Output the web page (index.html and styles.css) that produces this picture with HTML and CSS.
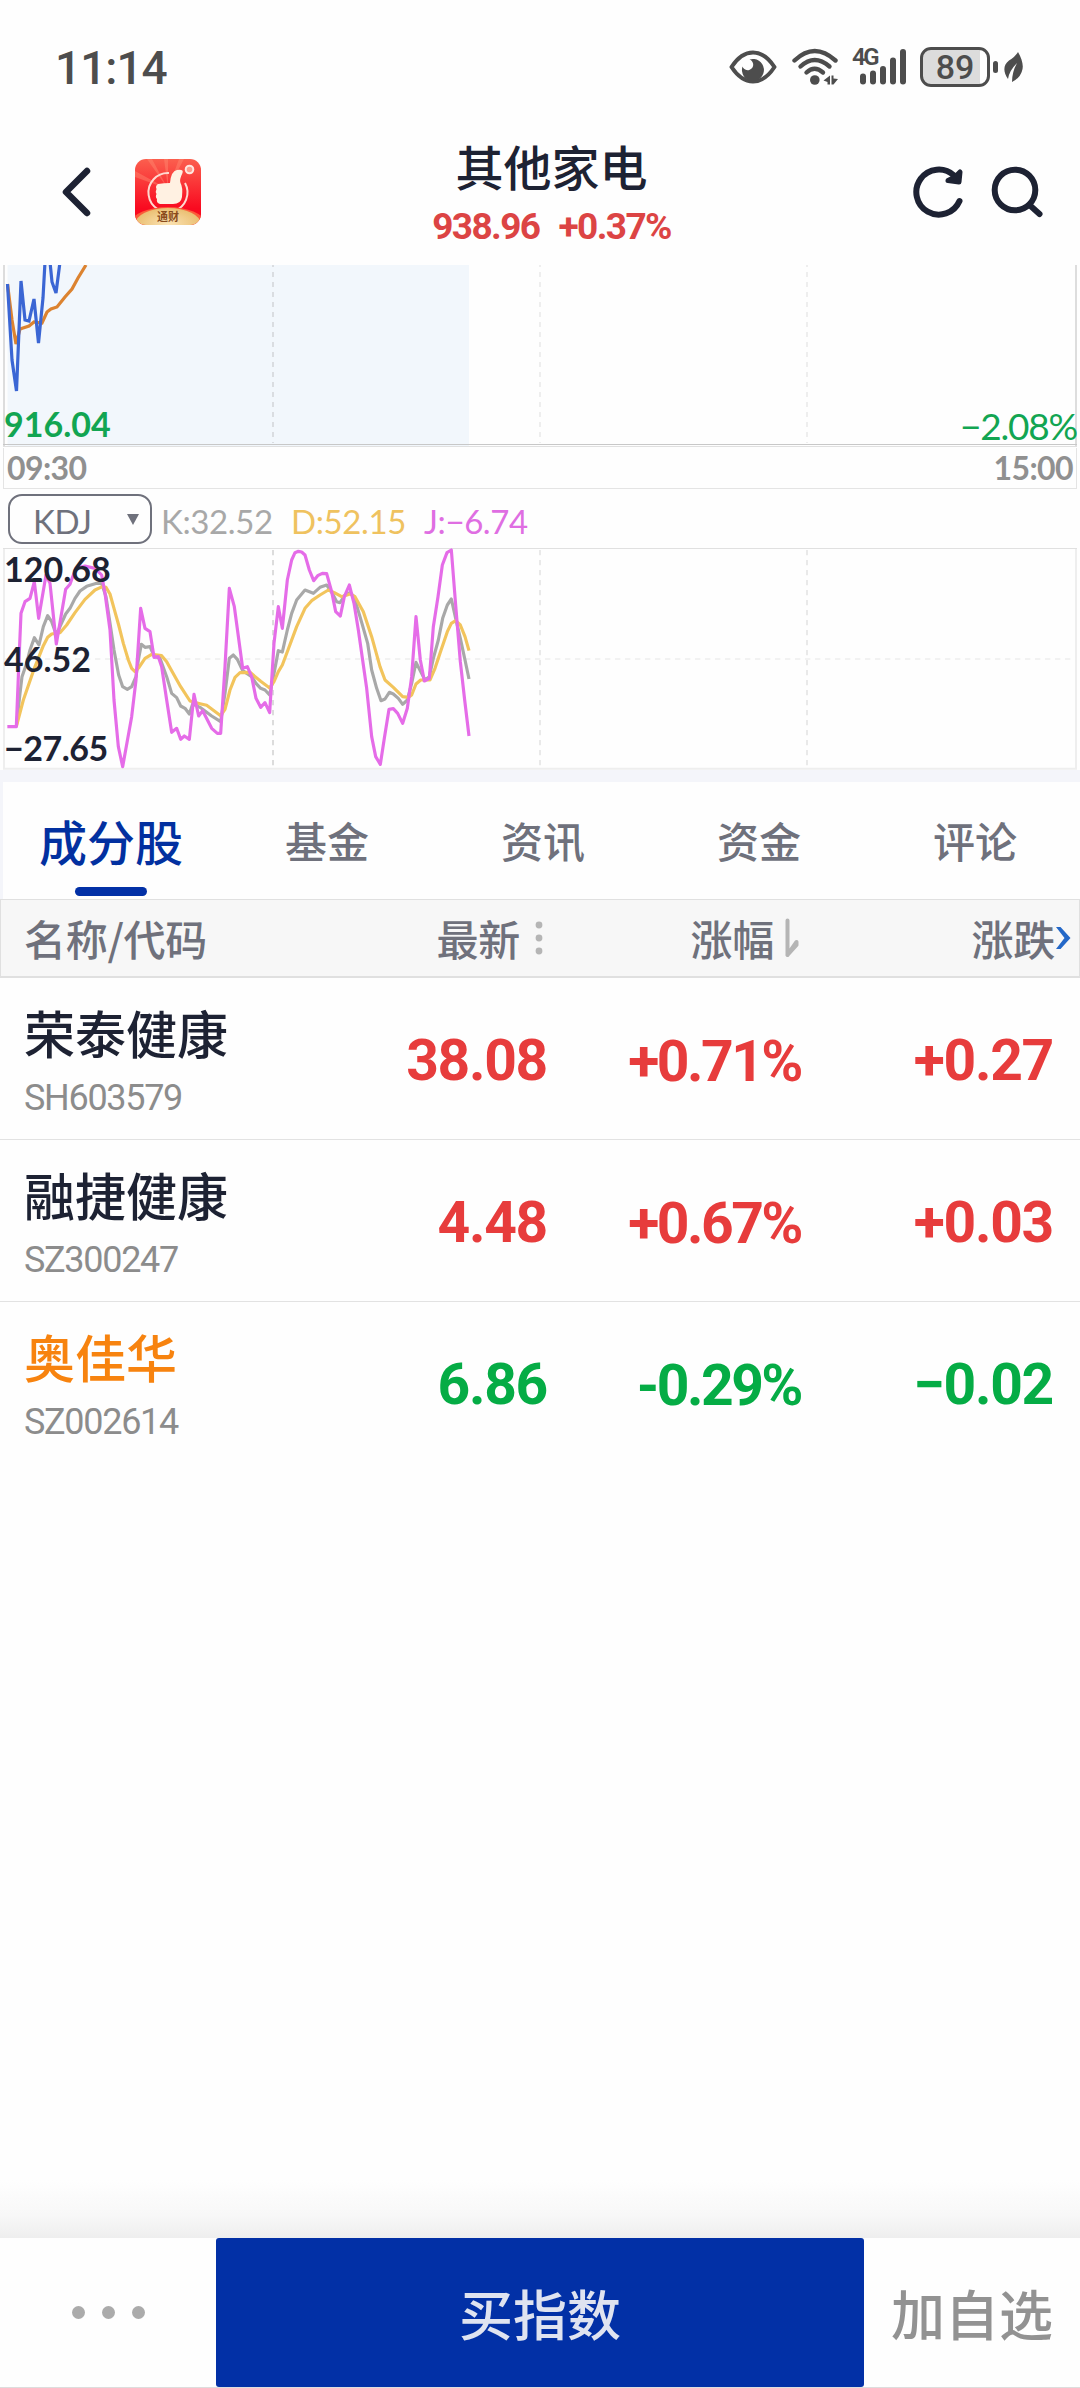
FILE: index.html
```html
<!DOCTYPE html>
<html lang="zh-CN">
<head>
  <meta charset="UTF-8">
  <meta name="viewport" content="width=device-width, initial-scale=1.0">
  <title>其他家电</title>
  <link rel="stylesheet" href="styles.css">
</head>
<body>
  <div class="status-bar">
    <span class="clock">11:14</span>
    <div class="status-icons">
      <svg class="icon-eye" width="48" height="34" viewBox="0 0 48 34">
        <path d="M2.5 17Q12 2.5 24 2.5T45.500 17Q36 31.500 24 31.500T2.500 17Z" fill="none" stroke="#4d4d4d" stroke-width="4" stroke-linejoin="round"/>
        <path d="M20.500 9.500A11 11 0 1 1 13.500 16.500A5.500 5.500 0 1 0 20.500 9.500Z" fill="#4d4d4d"/>
      </svg>
      <svg class="icon-wifi" width="46" height="38" viewBox="0 0 46 38">
        <g fill="none" stroke="#4d4d4d" stroke-width="4.400" stroke-linecap="round">
          <path d="M2.500 12.500Q22.500 -6.500 43.500 12.500"/>
          <path d="M8.500 18.500Q22.500 5.500 37.500 18.500"/>
          <path d="M14.500 24.500Q22.500 17 31 24.500"/>
        </g>
        <circle cx="22.800" cy="32" r="4.800" fill="#4d4d4d"/>
        <path d="M38 27.500V36.500H35.500V34L31.500 32.500ZM39.500 27.500H41.500V30.500L46 31L41.500 36.500H39.500Z" fill="#4d4d4d"/>
      </svg>
      <div class="signal">
        <span class="network">4G</span>
        <svg width="54" height="38" viewBox="0 0 54 38">
          <path d="M11 28V33M21 25V33M31 20.500V33M41 12V33M51 3.500V33" stroke="#4d4d4d" stroke-width="6" stroke-linecap="round" transform="translate(0 .5)"/>
        </svg>
      </div>
      <div class="battery"><span>89</span></div>
      <i class="battery-tip"></i>
      <svg class="icon-leaf" width="20" height="32" viewBox="0 0 20 32">
        <path d="M14 1C18 8 20 15 18 20Q16 27 8 31Q8 21 13 12Q5 20 4 28C-1 21 -1 14 5 9.500Q11 6 14 1Z" fill="#4d4d4d"/>
      </svg>
    </div>
  </div>

  <header class="header">
    <svg class="back" width="32" height="52" viewBox="0 0 32 52">
      <path d="M26 5L5 26L26 47" fill="none" stroke="#1d2233" stroke-width="6.500" stroke-linecap="round" stroke-linejoin="round"/>
    </svg>
    <svg class="app-logo" width="66" height="66" viewBox="0 0 66 66">
      <defs>
        <linearGradient id="red" x1="0" y1="0" x2="0" y2="1">
          <stop offset="0" stop-color="#fb5f4e"/>
          <stop offset=".75" stop-color="#f90a20"/>
        </linearGradient>
        <radialGradient id="gold">
          <stop offset="0" stop-color="#fbe3b4"/>
          <stop offset="1" stop-color="#eabf72"/>
        </radialGradient>
        <clipPath id="tile"><rect width="66" height="66" rx="11"/></clipPath>
      </defs>
      <g clip-path="url(#tile)">
        <rect width="66" height="66" fill="url(#red)"/>
        <path d="M33 30L12 0H17ZM33 30L29 0H33ZM33 30L0 12V18ZM33 30L44 0H49Z" fill="#ff8a70" opacity=".45"/>
        <path d="M34 14A19.500 19.500 0 1 0 50 24" fill="none" stroke="#ffd9d0" stroke-width="2"/>
        <path d="M35 24Q36 12 42 11Q49 10 47.500 14Q44 21 45.500 24Q48 28 47 38Q46 45 38 45H25Q21 44 22 40Q20 38 21.500 35Q20 33 21.500 30Q20 27 23 25Q29 24 35 24Z" fill="#fff1e2"/>
        <circle cx="54.500" cy="10.500" r="3.800" fill="#ff9c8c" stroke="#ffe6df" stroke-width="2"/>
        <ellipse cx="33" cy="63" rx="36" ry="15" fill="#fb5b3a"/>
        <ellipse cx="33" cy="65" rx="33" ry="16" fill="url(#gold)"/>
        <text class="logo-text" x="33" y="62" text-anchor="middle">通财</text>
      </g>
    </svg>
    <div class="title">
      <h1>其他家电</h1>
      <p><span>938.96</span><span>+0.37%</span></p>
    </div>
    <svg class="refresh" width="52" height="54" viewBox="0 0 52 54">
      <path d="M47.500 36A22.500 22.500 0 1 1 42 10.500" fill="none" stroke="#1d2233" stroke-width="6" stroke-linecap="round"/>
      <path d="M48 7L47 17L36 15.500L43 12Z" fill="#1d2233" stroke="#1d2233" stroke-width="5" stroke-linejoin="round"/>
    </svg>
    <svg class="search" width="52" height="54" viewBox="0 0 52 54">
      <circle cx="24" cy="25" r="20.300" fill="none" stroke="#1d2233" stroke-width="6"/>
      <path d="M38.500 40L48.500 49" stroke="#1d2233" stroke-width="6" stroke-linecap="round"/>
    </svg>
  </header>

  <section class="chart price-chart">
    <svg width="1080" height="183" viewBox="0 265 1080 183">
      <rect x="7.500" y="265" width="461.500" height="181" fill="#f2f7fc"/>
      <g stroke-width="2" stroke-dasharray="5 5" stroke-dashoffset="3">
        <path d="M273 265V443" stroke="#dadde1"/>
        <path d="M540 265V443M807 265V443" stroke="#eee"/>
      </g>
      <path d="M4 265V446M1076 265V446" stroke="#ddd" stroke-width="2"/>
      <path d="M3 444.500H1077" stroke="#c8c8c8"/>
      <path d="M3 446.500H1077" stroke="#e0e0e0"/>
      <g fill="none" stroke-width="3.200">
        <path stroke="#dc8330" d="M7.500 284L12 320L16 344L20 329L29 326L34 322L42 323L47 312L51 309L57 307L65 297L72 289L78 278L86 265"/>
        <path stroke="#3b66d4" d="M7.500 284L12 360L16.500 391L21 281L25 320L29 321L34 299L38.500 343L43 298L45 262L50 262L52 282L56 293L60 262"/>
      </g>
    </svg>
    <span class="label low">916.04</span>
    <span class="label low-percent">−2.08%</span>
  </section>
  <div class="time-axis"><span>09:30</span><span>15:00</span></div>

  <div class="indicator">
    <div class="select"><span>KDJ</span><i></i></div>
    <span class="k">K:32.52</span>
    <span class="d">D:52.15</span>
    <span class="j">J:−6.74</span>
  </div>

  <section class="chart kdj-chart">
    <svg width="1080" height="222" viewBox="0 204 3240 666">
      <g stroke="#e9e9e9" stroke-width="6" stroke-dasharray="16 14">
        <path d="M819 210V860" stroke="#dcdcdc"/>
        <path d="M1620 210V860M2421 210V860"/>
        <path d="M15 537H3225" stroke="#eee" stroke-width="4"/>
      </g>
      <path d="M12 206V866M3228 206V866M9 866H3231" stroke="#eee" stroke-width="6"/>
      <path d="M9 205.500H3231" stroke="#e0e0e0" stroke-width="3"/>
      <g fill="none" stroke-width="9.500" stroke-linejoin="round">
        <path stroke="#a8a8a8" d="M49 740L60 640L66 590L80 550L90 510L103 473L117 495L130 440L143 407L155 425L169 465L180 440L197 402L210 385L225 355L240 333L260 319L290 310L305 310L318 350L330 430L342 510L356 585L368 620L382 628L395 620L408 590L415 540L424 493L435 502L450 500L462 528L480 535L500 590L515 640L530 653L542 678L555 685L568 702L578 672L600 682L635 708L662 725L675 640L688 535L700 525L712 538L728 572L755 590L768 610L782 625L795 630L809 645L822 580L835 512L847 516L862 450L875 400L890 360L915 330L940 340L960 322L980 315L997 340L1010 365L1020 368L1035 345L1050 338L1062 350L1080 410L1103 490L1115 570L1130 625L1143 662L1155 657L1168 637L1180 642L1195 655L1208 673L1222 660L1235 610L1248 547L1262 575L1275 600L1288 590L1300 535L1315 480L1328 415L1342 375L1354 357L1367 415L1381 475L1395 540L1407 597"/>
        <path stroke="#f2c45c" d="M49 740L70 660L103 565L117 530L130 497L143 472L155 462L180 458L200 435L225 398L255 358L285 330L307 320L318 322L330 342L342 385L356 435L370 490L385 540L395 565L405 575L417 562L435 535L455 523L485 527L500 545L515 572L542 620L570 663L600 671L620 676L662 707L675 688L690 630L705 592L720 578L750 577L782 604L809 624L822 605L835 575L847 555L865 507L890 440L915 385L935 362L960 345L985 330L1003 338L1025 350L1050 342L1065 350L1090 395L1115 470L1140 560L1155 600L1180 622L1208 650L1225 652L1235 645L1248 612L1262 600L1290 600L1305 565L1320 520L1342 455L1354 430L1367 422L1381 435L1395 470L1407 512"/>
        <path stroke="#e56ce8" d="M22 740L49 740L57 540L63 400L75 365L90 355L103 305L116 415L138 285L150 310L169 492L197 328L210 313L220 285L228 265L255 258L285 265L305 285L315 340L330 450L342 660L355 800L368 860L395 710L408 600L422 385L435 445L450 455L462 532L475 530L485 560L500 660L515 757L530 745L542 778L553 768L568 778L582 643L596 708L608 692L635 745L652 760L662 760L675 560L688 325L703 380L728 565L742 560L755 590L768 655L782 682L795 668L809 698L822 490L835 380L847 445L862 300L875 240L885 218L895 214L905 216L915 225L928 270L941 302L953 287L967 280L980 281L995 335L1007 395L1021 408L1033 350L1048 315L1062 370L1075 450L1100 625L1115 770L1127 830L1141 853L1153 775L1167 688L1180 686L1193 700L1208 730L1222 685L1235 590L1248 410L1261 540L1273 603L1288 595L1300 440L1314 350L1327 255L1341 218L1354 210L1367 375L1381 545L1394 660L1407 768"/>
      </g>
    </svg>
    <span class="label kdj-max">120.68</span>
    <span class="label kdj-mid">46.52</span>
    <span class="label kdj-min">−27.65</span>
  </section>

  <nav class="tabs">
    <a class="active">成分股</a>
    <a>基金</a>
    <a>资讯</a>
    <a>资金</a>
    <a>评论</a>
  </nav>

  <div class="table-head">
    <span>名称/代码</span>
    <div class="latest">最新
      <svg width="8" height="34" viewBox="0 0 8 34" fill="#b5b5b5"><circle cx="4" cy="4" r="3.400"/><circle cx="4" cy="17" r="3.400"/><circle cx="4" cy="30" r="3.400"/></svg>
    </div>
    <div class="percent">涨幅
      <svg width="14" height="40" viewBox="0 0 14 40"><path d="M2.500 2.500V37L11.500 24V27L2.500 37" fill="none" stroke="#b5b5b5" stroke-width="4" stroke-linecap="round" stroke-linejoin="round"/></svg>
    </div>
    <div class="change">涨跌</div>
    <svg class="more" width="16" height="24" viewBox="0 0 16 24"><path d="M1 1H5.500L15.500 12L5.500 23H1L9.500 12Z" fill="#2468c8"/></svg>
  </div>

  <div class="row up">
    <div class="stock"><h2>荣泰健康</h2><p>SH603579</p></div>
    <span class="num">38.08</span>
    <span class="num pct">+0.71%</span>
    <span class="num">+0.27</span>
  </div>
  <div class="row up">
    <div class="stock"><h2>融捷健康</h2><p>SZ300247</p></div>
    <span class="num">4.48</span>
    <span class="num pct">+0.67%</span>
    <span class="num">+0.03</span>
  </div>
  <div class="row down">
    <div class="stock own"><h2>奥佳华</h2><p>SZ002614</p></div>
    <span class="num">6.86</span>
    <span class="num pct">-0.29%</span>
    <span class="num">−0.02</span>
  </div>

  <footer class="bottom-bar">
    <div class="dots"><i></i><i></i><i></i></div>
    <button class="buy">买指数</button>
    <button class="add">加自选</button>
  </footer>
</body>
</html>
```
FILE: styles.css
```css
* {
  box-sizing: border-box;
}

body {
  margin: 0;
  width: 1080px;
  height: 2388px;
  display: flex;
  flex-direction: column;
  background: #fefefe;
  color: #1d2233;
  font-family: "Noto Sans CJK SC", sans-serif;
  overflow: hidden;
}

svg {
  display: block;
  flex: none;
}

h1, h2, p {
  margin: 0;
}

/* status bar */
.status-bar {
  height: 134px;
  padding: 0 56px 0 55px;
  display: flex;
  align-items: center;
  justify-content: space-between;
  color: #4d4d4d;
  font-family: Roboto, sans-serif;
}

.clock {
  font-size: 46px;
  font-weight: 500;
  letter-spacing: -1px;
  padding-top: 1px;
}

.status-icons {
  display: flex;
  align-items: center;
}

.icon-wifi {
  margin-left: 15px;
}

.signal {
  display: flex;
  position: relative;
  margin-left: 14px;
}

.network {
  position: absolute;
  left: 0;
  top: 0;
  font-size: 24px;
  line-height: 19px;
  font-weight: 600;
  letter-spacing: -2.5px;
}

.battery {
  width: 70px;
  height: 40px;
  margin-left: 14px;
  border: 3px solid #4d4d4d;
  border-radius: 11px;
  background: linear-gradient(to right, #dcdcdc 57px, #fefefe 57px);
  text-align: center;
  font-size: 34px;
  line-height: 35px;
  font-weight: 500;
}

.battery-tip {
  width: 5px;
  height: 12px;
  margin-left: 3px;
  border-radius: 3px;
  background: #4d4d4d;
}

.icon-leaf {
  margin-left: 6px;
}

/* header */
.header {
  height: 131px;
  padding: 0 37px 15px 61px;
  display: flex;
  align-items: center;
}

.app-logo {
  margin-left: 42px;
}

.logo-text {
  font-size: 11px;
  font-weight: 700;
  fill: #8a4b1c;
}

.title {
  flex: 1;
  text-align: center;
  padding-right: 10px;
}

.title h1 {
  font-size: 48px;
  line-height: 60px;
  font-weight: 500;
  margin-top: 3px;
}

.title p {
  display: flex;
  justify-content: center;
  gap: 19px;
  color: #dc4444;
  font-family: Roboto, sans-serif;
  font-size: 37px;
  line-height: 60px;
  font-weight: 700;
  letter-spacing: -1.6px;
  margin-top: 2px;
  margin-bottom: -5px;
}

.refresh {
  margin-right: 27px;
}

/* charts */
.chart {
  position: relative;
}

.label {
  position: absolute;
  left: 4px;
  font-family: Lato, sans-serif;
  font-size: 34px;
  line-height: 34px;
  font-weight: 700;
}

.low {
  top: 142px;
  color: #12a552;
}

.low-percent {
  top: 144px;
  left: auto;
  right: 3px;
  font-size: 37px;
  font-weight: 400;
  letter-spacing: -1.2px;
  color: #12a552;
}

.kdj-max {
  top: 4px;
}

.kdj-mid {
  top: 94px;
}

.kdj-min {
  top: 183px;
  letter-spacing: -0.5px;
}

.time-axis {
  height: 41px;
  margin: 0 3px;
  padding: 0 3px;
  display: flex;
  justify-content: space-between;
  border: 1px solid #e4e4e4;
  border-top: none;
  color: #909090;
  font-family: Lato, sans-serif;
  font-size: 32px;
  line-height: 39px;
  font-weight: 700;
  letter-spacing: -0.6px;
}

.indicator {
  height: 59px;
  padding: 1px 8px 0;
  display: flex;
  align-items: center;
  font-family: Lato, sans-serif;
  font-size: 33px;
  letter-spacing: -0.4px;
}

.indicator span {
  padding-top: 4px;
}

.select {
  width: 144px;
  height: 50px;
  padding: 0 11px 0 23px;
  margin-right: 9px;
  display: flex;
  align-items: center;
  justify-content: space-between;
  border: 2px solid #6f717c;
  border-radius: 14px;
  color: #6f717c;
}

.select i {
  border: 6.5px solid transparent;
  border-top: 11px solid #6f717c;
  border-bottom: none;
}

.k {
  width: 130px;
  color: #a8a8a8;
}

.d {
  width: 133px;
  color: #efc25f;
}

.j {
  color: #df6ee2;
}

/* tabs */
.tabs {
  height: 129px;
  display: grid;
  grid-template-columns: repeat(5, 216px);
  border-top: 12px solid #f4f5fa;
  border-left: 3px solid #f4f5fa;
  overflow: hidden;
}

.tabs a {
  position: relative;
  text-align: center;
  font-size: 42px;
  line-height: 116px;
  font-weight: 500;
  color: #6f717c;
}

.tabs .active {
  font-size: 48px;
  color: #0230a0;
}

.tabs .active::after {
  content: "";
  position: absolute;
  left: 72px;
  bottom: 3px;
  width: 72px;
  height: 9px;
  border-radius: 5px;
  background: #0230a6;
}

/* table */
.table-head {
  height: 79px;
  padding-left: 23px;
  display: grid;
  grid-template-columns: 276px 248px 254px 253px 16px;
  align-items: center;
  background: #f7f7f7;
  border: 1px solid #e0e0e0;
  border-bottom-width: 2px;
  color: #6f717c;
  font-size: 42px;
  line-height: 72px;
  font-weight: 500;
  letter-spacing: -0.3px;
}

.table-head > div {
  display: flex;
  align-items: center;
  justify-content: flex-end;
}

.latest {
  gap: 15px;
  padding-right: 5px;
}

.percent {
  gap: 11px;
  padding-right: 3px;
}

.row {
  height: 162px;
  padding-left: 24px;
  display: grid;
  grid-template-columns: 275px 248px 254px 252px;
  border-bottom: 1px solid #e2e2e2;
}

.row.down {
  border-bottom: none;
}

.stock h2 {
  font-size: 51px;
  line-height: 60px;
  font-weight: 500;
  padding-top: 24px;
}

.stock p {
  margin-top: 6px;
  color: #8c8c8c;
  font-family: Roboto, sans-serif;
  font-size: 36px;
  line-height: 60px;
  letter-spacing: -1.3px;
}

.stock.own h2 {
  color: #f7830f;
}

.num {
  text-align: right;
  font-family: Roboto, sans-serif;
  font-size: 57px;
  line-height: 165px;
  font-weight: 700;
  letter-spacing: -1.3px;
}

.pct {
  padding-top: 1px;
  letter-spacing: -2.5px;
}

.up .num {
  color: #e73c3c;
}

.down .num {
  color: #05ac45;
}

/* bottom bar */
.bottom-bar {
  height: 208px;
  margin-top: auto;
  padding-top: 58px;
  display: grid;
  grid-template-columns: 216px 648px 216px;
  background: linear-gradient(to bottom, #fefefe 0, #f8f8f8 35px, #eee 58px, #fefefe 58px);
  border-bottom: 1px solid #ddd;
}

.dots {
  display: flex;
  align-items: center;
  justify-content: center;
  gap: 17px;
}

.dots i {
  width: 13px;
  height: 13px;
  border-radius: 50%;
  background: #ababab;
}

.bottom-bar button {
  border: none;
  padding: 0;
  background: none;
  font-family: inherit;
  font-size: 54px;
  font-weight: 500;
}

.bottom-bar .buy {
  border-radius: 3px;
  background: #0230a6;
  color: #dfe3f0;
}

.bottom-bar .add {
  color: #929292;
}
```
